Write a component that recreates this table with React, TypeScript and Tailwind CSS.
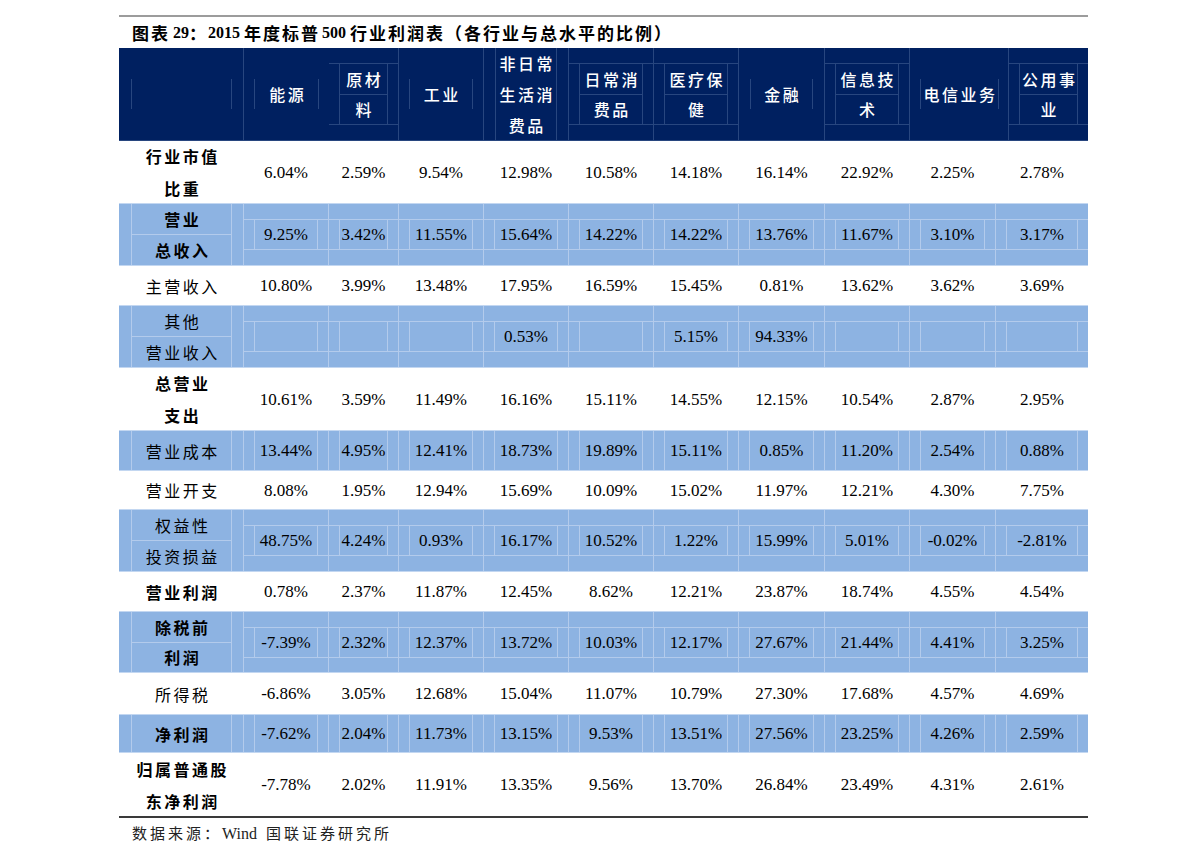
import React from "react";

const CJK = "font-['Noto_Sans_CJK_SC',sans-serif]";
const NUM = "font-['Liberation_Serif','Noto_Sans_CJK_SC',serif]";

const bodyW = [
  "w-[85px]",
  "w-[70px]",
  "w-[85px]",
  "w-[85px]",
  "w-[85px]",
  "w-[85px]",
  "w-[86px]",
  "w-[85px]",
  "w-[86px]",
  "w-[92px]",
];

type Row = {
  label: string[];
  bold: boolean;
  blue: boolean;
  h: string;
  tall: boolean;
  vals: string[];
};

const rows: Row[] = [
  { label: ["行业市值", "比重"], bold: true, blue: false, h: "h-[62px]", tall: true, vals: ["6.04%", "2.59%", "9.54%", "12.98%", "10.58%", "14.18%", "16.14%", "22.92%", "2.25%", "2.78%"] },
  { label: ["营业", "总收入"], bold: true, blue: true, h: "h-[63px]", tall: true, vals: ["9.25%", "3.42%", "11.55%", "15.64%", "14.22%", "14.22%", "13.76%", "11.67%", "3.10%", "3.17%"] },
  { label: ["主营收入"], bold: false, blue: false, h: "h-[39px]", tall: false, vals: ["10.80%", "3.99%", "13.48%", "17.95%", "16.59%", "15.45%", "0.81%", "13.62%", "3.62%", "3.69%"] },
  { label: ["其他", "营业收入"], bold: false, blue: true, h: "h-[63px]", tall: true, vals: ["", "", "", "0.53%", "", "5.15%", "94.33%", "", "", ""] },
  { label: ["总营业", "支出"], bold: true, blue: false, h: "h-[62px]", tall: true, vals: ["10.61%", "3.59%", "11.49%", "16.16%", "15.11%", "14.55%", "12.15%", "10.54%", "2.87%", "2.95%"] },
  { label: ["营业成本"], bold: false, blue: true, h: "h-[41px]", tall: false, vals: ["13.44%", "4.95%", "12.41%", "18.73%", "19.89%", "15.11%", "0.85%", "11.20%", "2.54%", "0.88%"] },
  { label: ["营业开支"], bold: false, blue: false, h: "h-[38px]", tall: false, vals: ["8.08%", "1.95%", "12.94%", "15.69%", "10.09%", "15.02%", "11.97%", "12.21%", "4.30%", "7.75%"] },
  { label: ["权益性", "投资损益"], bold: false, blue: true, h: "h-[63px]", tall: true, vals: ["48.75%", "4.24%", "0.93%", "16.17%", "10.52%", "1.22%", "15.99%", "5.01%", "-0.02%", "-2.81%"] },
  { label: ["营业利润"], bold: true, blue: false, h: "h-[39px]", tall: false, vals: ["0.78%", "2.37%", "11.87%", "12.45%", "8.62%", "12.21%", "23.87%", "18.74%", "4.55%", "4.54%"] },
  { label: ["除税前", "利润"], bold: true, blue: true, h: "h-[62px]", tall: true, vals: ["-7.39%", "2.32%", "12.37%", "13.72%", "10.03%", "12.17%", "27.67%", "21.44%", "4.41%", "3.25%"] },
  { label: ["所得税"], bold: false, blue: false, h: "h-[41px]", tall: false, vals: ["-6.86%", "3.05%", "12.68%", "15.04%", "11.07%", "10.79%", "27.30%", "17.68%", "4.57%", "4.69%"] },
  { label: ["净利润"], bold: true, blue: true, h: "h-[39px]", tall: false, vals: ["-7.62%", "2.04%", "11.73%", "13.15%", "9.53%", "13.51%", "27.56%", "23.25%", "4.26%", "2.59%"] },
  { label: ["归属普通股", "东净利润"], bold: true, blue: false, h: "h-[63px]", tall: true, vals: ["-7.78%", "2.02%", "11.91%", "13.35%", "9.56%", "13.70%", "26.84%", "23.49%", "4.31%", "2.61%"] },
];

function LabelText({ text, bold }: { text: string; bold: boolean }) {
  return (
    <span
      className={`${CJK} text-[16px] leading-none tracking-[2.5px] pl-[2.5px] whitespace-nowrap text-black ${bold ? "font-bold" : "font-normal"}`}
    >
      {text}
    </span>
  );
}

function LabelCell({ r }: { r: Row }) {
  const line = r.blue ? "border-[#b3cbec]" : "border-transparent";
  return (
    <div className={`w-[125px] h-full flex pl-[12px] pr-[11px] border-r ${line}`}>
      <div className={`flex-1 flex flex-col border-x ${line}`}>
        {r.label.length === 1 ? (
          <div className="flex-1 flex items-center justify-center">
            <LabelText text={r.label[0]} bold={r.bold} />
          </div>
        ) : (
          <>
            <div className={`flex-1 flex items-center justify-center border-b ${line}`}>
              <LabelText text={r.label[0]} bold={r.bold} />
            </div>
            <div className="flex-1 flex items-center justify-center">
              <LabelText text={r.label[1]} bold={r.bold} />
            </div>
          </>
        )}
      </div>
    </div>
  );
}

function DataCell({ v, w, r, last }: { v: string; w: string; r: Row; last: boolean }) {
  const line = r.blue ? "border-[#b3cbec]" : "border-transparent";
  const txt = <span className={`${NUM} text-[17px] leading-none whitespace-nowrap text-black`}>{v}</span>;
  return (
    <div className={`${w} h-full flex flex-col justify-center ${last ? "" : "border-r"} ${line}`}>
      {r.tall ? (
        <div className={`h-[31px] border-y ${line}`}>
          <div className={`h-full mx-[10px] border-x ${line} flex items-center justify-center`}>{txt}</div>
        </div>
      ) : (
        <div className={`h-full mx-[10px] border-x ${line} flex items-center justify-center`}>{txt}</div>
      )}
    </div>
  );
}

function BodyRow({ r }: { r: Row }) {
  return (
    <div
      className={`${r.h} flex ${r.blue ? "bg-[#8db3e2] border-y border-[#c3d7f1]" : "bg-white"}`}
    >
      <LabelCell r={r} />
      {r.vals.map((v, i) => (
        <DataCell key={i} v={v} w={bodyW[i]} r={r} last={i === r.vals.length - 1} />
      ))}
    </div>
  );
}

const HL = "border-[#28467f]";

function HText({ t }: { t: string }) {
  return (
    <span className={`${CJK} text-[16px] leading-none tracking-[2.5px] pl-[2.5px] whitespace-nowrap text-white font-medium`}>{t}</span>
  );
}

function HSingle({ w, t, border = true, wide = false }: { w: string; t?: string; border?: boolean; wide?: boolean }) {
  return (
    <div className={`${w} h-full flex items-center ${border ? `border-r ${HL}` : ""}`}>
      <div className={`h-[30px] flex-1 ${wide ? "mx-[11px]" : "mx-[10px]"} border-x ${HL} flex items-center justify-center`}>
        {t ? <HText t={t} /> : null}
      </div>
    </div>
  );
}

function HDouble({ w, a, b, border = true }: { w: string; a: string; b: string; border?: boolean }) {
  return (
    <div className={`${w} h-full flex flex-col justify-center ${border ? `border-r ${HL}` : ""}`}>
      <div className={`h-[62px] border-y ${HL}`}>
        <div className={`h-full mx-[10px] border-x ${HL} flex flex-col`}>
          <div className={`flex-1 flex items-center justify-center border-b ${HL}`}>
            <HText t={a} />
          </div>
          <div className="flex-1 flex items-center justify-center">
            <HText t={b} />
          </div>
        </div>
      </div>
    </div>
  );
}

function HTriple({ w, lines }: { w: string; lines: string[] }) {
  return (
    <div className={`${w} h-full flex border-r ${HL}`}>
      <div className={`flex-1 mx-[11px] border-x ${HL} flex flex-col justify-center`}>
        {lines.map((l, i) => (
          <div key={i} className="h-[31px] flex items-center justify-center">
            <HText t={l} />
          </div>
        ))}
      </div>
    </div>
  );
}

export default function App() {
  return (
    <div className="w-[1191px] h-[865px] bg-white overflow-hidden">
      <div className="ml-[119px] w-[969px] pt-[15px]">
        <div className="h-[2px] bg-[#9c9c9c]" />
        <div className="h-[31px] flex items-center pl-[13px] text-black font-bold whitespace-nowrap">
          <span className={`${CJK} text-[17px] tracking-[2px]`}>图表</span>
          <span className={`${NUM} text-[16px] ml-[3px]`}>29</span>
          <span className={`${CJK} text-[17px] tracking-[2px]`}>：</span>
          <span className={`${NUM} text-[16px]`}>2015</span>
          <span className={`${CJK} text-[17px] tracking-[2px] ml-[4px]`}>年度标普</span>
          <span className={`${NUM} text-[16px] ml-[2px]`}>500</span>
          <span className={`${CJK} text-[17px] tracking-[2px] ml-[4px]`}>行业利润表（各行业与总水平的比例）</span>
        </div>
        <div className={`h-[93px] bg-[#002060] flex border-b ${HL}`}>
          <div className={`w-[125px] h-full flex items-center border-r ${HL}`}>
            <div className={`h-[30px] flex-1 ml-[12px] mr-[11px] border-x ${HL}`} />
          </div>
          <HSingle w="w-[85px]" t="能源" border={false} />
          <HDouble w="w-[70px]" a="原材" b="料" />
          <HSingle w="w-[85px]" t="工业" />
          <HTriple w="w-[85px]" lines={["非日常", "生活消", "费品"]} />
          <HDouble w="w-[85px]" a="日常消" b="费品" />
          <HDouble w="w-[85px]" a="医疗保" b="健" />
          <HSingle w="w-[86px]" t="金融" wide />
          <HDouble w="w-[85px]" a="信息技" b="术" />
          <HSingle w="w-[99px]" t="电信业务" />
          <HDouble w="w-[79px]" a="公用事" b="业" border={false} />
        </div>
        {rows.map((r, i) => (
          <BodyRow key={i} r={r} />
        ))}
        <div className="h-[2px] bg-[#3a3a3a]" />
        <div className="h-[31px] flex items-center pl-[13px] text-[#222] whitespace-nowrap">
          <span className={`${CJK} text-[15px] tracking-[3px]`}>数据来源：</span>
          <span className={`${NUM} text-[16px]`}>Wind</span>
          <span className={`${CJK} text-[15px] tracking-[3px] ml-[9px]`}>国联证券研究所</span>
        </div>
      </div>
    </div>
  );
}
